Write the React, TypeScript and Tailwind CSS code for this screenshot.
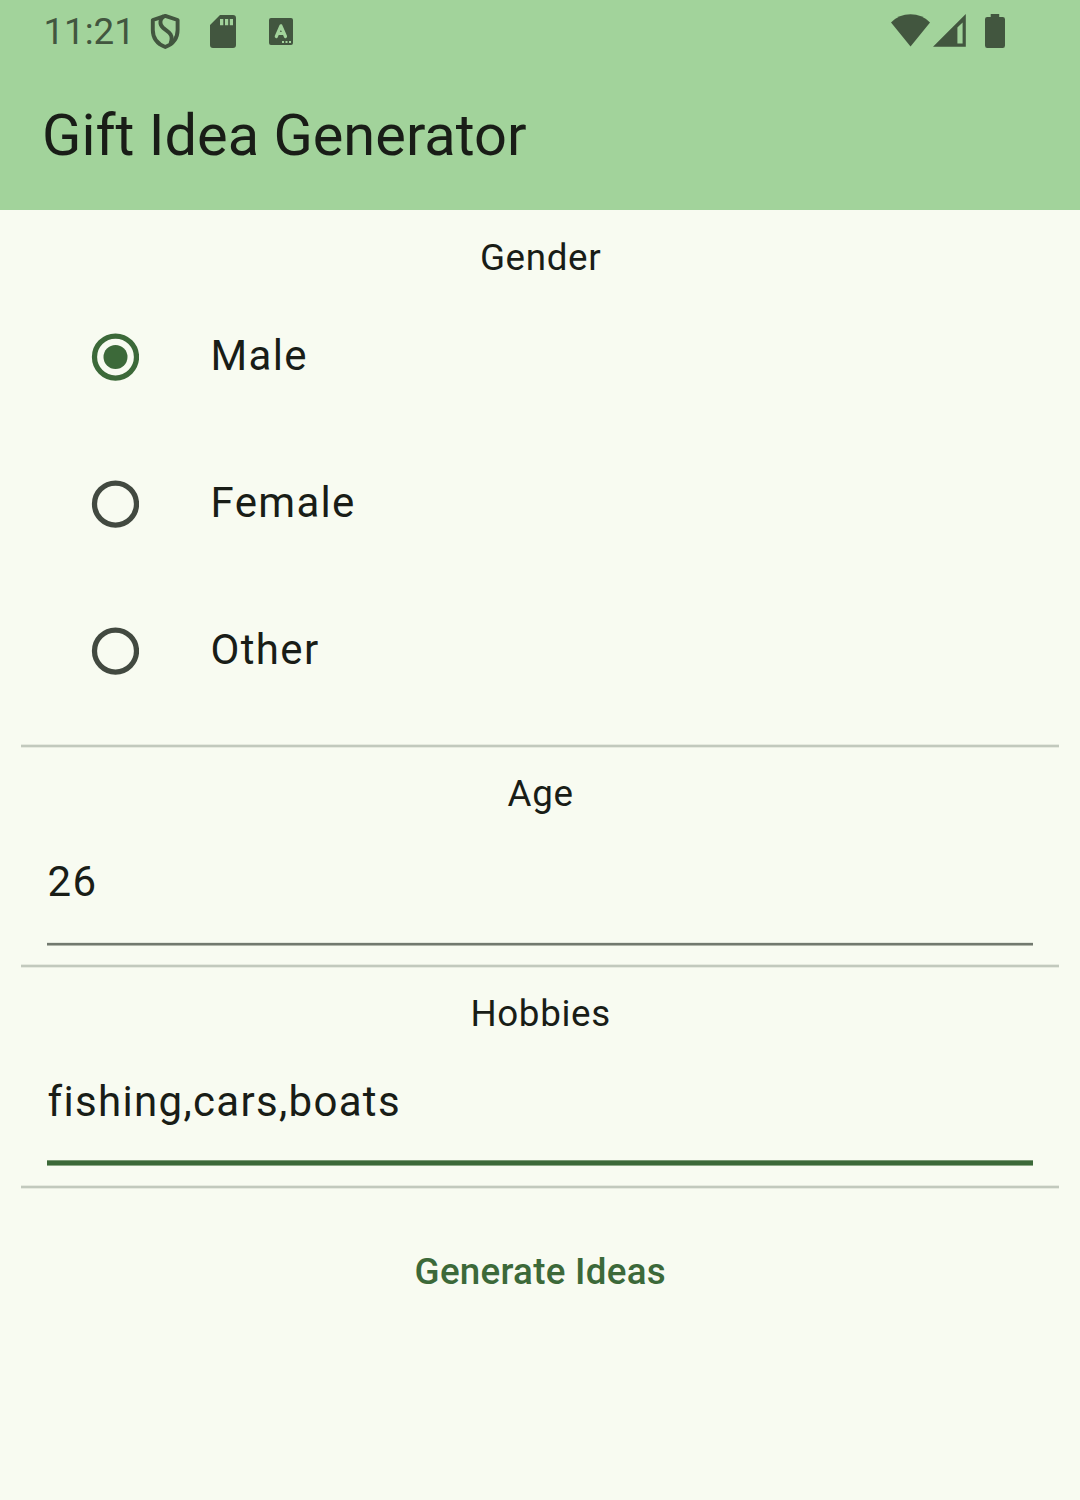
import React, { useState } from "react";

const genders = ["Male", "Female", "Other"];

function StatusBar() {
  return (
    <div className="flex h-[63px] items-center justify-between pl-[43px] pr-[75px] text-[#42563f]">
      <div className="flex items-center">
        <span className="w-[107px] pl-[0.4px] text-[36.75px] leading-[63px]">11:21</span>
        <svg className="h-[37px] w-[30px]" viewBox="0 0 30 37" fill="none" stroke="currentColor" strokeWidth="3.9" strokeLinejoin="round">
          <path d="M15.3 2.9 27.6 7V17C27.6 25.5 23 31 15.3 34 7.5 31 2.8 25.5 2.8 17V7Z" />
          <path d="M14 3C9.5 6.5 9.3 11.5 13 14.8C15.5 17 18.5 18.3 20.5 21.3C22.3 24.3 22 27 20.5 30.5" />
        </svg>
        <svg className="ml-[30px] h-[33px] w-[26px]" viewBox="0 0 26 33" fill="currentColor">
          <path fillRule="evenodd" d="M10 0H23Q26 0 26 3V30Q26 33 23 33H3Q0 33 0 30V10ZM10 4V10.3H13.3V4ZM15 4V10.3H18.2V4ZM19.8 4V10.3H23V4Z" />
        </svg>
        <svg className="ml-[33px] h-[27px] w-[24px]" viewBox="0 0 24 27" fill="currentColor">
          <path fillRule="evenodd" d="M2 0H22Q24 0 24 2V25Q24 27 22 27H2Q0 27 0 25V2Q0 0 2 0ZM13 23V25H15V23ZM16.5 23V25H18.5V23ZM20 23V25H22V23Z" />
          <path d="M7.3 18.5 11.9 7.8 16.5 18.5M9 15.5H15" fill="none" stroke="#a2d39b" strokeWidth="3.2" strokeLinecap="round" strokeLinejoin="round" />
        </svg>
      </div>
      <div className="-mt-[2px] flex items-center">
        <svg className="h-[33px] w-[39px]" viewBox="0 0 39 33" fill="currentColor">
          <path d="M0 8.5Q8 .3 19.5 .3T39 8.5L19.5 32.5Z" />
        </svg>
        <svg className="ml-[3px] h-[33px] w-[33px]" viewBox="0 0 33 33" fill="currentColor">
          <path fillRule="evenodd" d="M32.8 0V32.8H0ZM29.6 8.5 24.4 13.5V29.6H29.6Z" />
        </svg>
        <svg className="ml-[18px] h-[34px] w-[21px]" viewBox="0 0 21 34" fill="currentColor">
          <path d="M6.7 0H15.2V3H18.7Q21 3 21 5.3V31.5Q21 34 18.7 34H3.2Q1 34 1 31.5V5.3Q1 3 3.2 3H6.7Z" />
        </svg>
      </div>
    </div>
  );
}

function Radio({ checked }: { checked: boolean }) {
  return (
    <svg className={checked ? "h-[48px] w-[48px] text-[#3c6939]" : "h-[48px] w-[48px] text-[#424940]"} viewBox="0 0 48 48">
      <circle cx="24.5" cy="24" r="21" fill="none" stroke="currentColor" strokeWidth="5.25" />
      {checked && <circle cx="24.5" cy="24" r="12" fill="currentColor" />}
    </svg>
  );
}

function Divider() {
  return <div className="mx-[21px] h-[4px] border-y border-[#e6eadf] bg-[#c2c9bd]" />;
}

function Label({ children }: { children: React.ReactNode }) {
  return (
    <div className="h-[52px] pl-[1.2px] text-center text-[36.75px] leading-[52px] tracking-[0.656px]">{children}</div>
  );
}

export default function App() {
  const [gender, setGender] = useState("Male");
  const [age, setAge] = useState("26");
  const [hobbies, setHobbies] = useState("fishing,cars,boats");

  return (
    <div className="flex h-[1500px] w-[1080px] flex-col overflow-hidden bg-[#f8fbf1] font-['Roboto',sans-serif] text-[#191d17]">
      <header className="h-[210px] bg-[#a2d39b]">
        <StatusBar />
        <h1 className="pl-[42.1px] text-[57.75px] leading-[145px]">Gift Idea Generator</h1>
      </header>

      <section className="h-[534px] pt-[22px]">
        <Label>Gender</Label>
        <div className="-mt-px">
          {genders.map((g) => (
            <button key={g} onClick={() => setGender(g)} className="flex h-[147px] w-full items-center pl-[91px] text-left">
              <Radio checked={gender === g} />
              <span className="-mt-[2px] ml-[71.6px] text-[42px] leading-[63px] tracking-[1.3125px]">{g}</span>
            </button>
          ))}
        </div>
      </section>
      <Divider />

      <section className="h-[216px] pt-[20px]">
        <Label>Age</Label>
        <div className="mx-[47px]">
          <input
            value={age}
            onChange={(e) => setAge(e.target.value)}
            className="block h-[122px] w-full pl-[0.6px] pt-px text-[42px] tracking-[1.3125px] outline-none"
          />
          <div className="h-[4px] border-y border-t-[#e4e8de] border-b-[#b1b6ab] bg-[#72796f]" />
        </div>
      </section>
      <Divider />

      <section className="h-[217px] pt-[20px]">
        <Label>Hobbies</Label>
        <div className="mx-[47px]">
          <input
            value={hobbies}
            onChange={(e) => setHobbies(e.target.value)}
            className="block h-[120px] w-full pl-[0.6px] pt-[3px] text-[42px] tracking-[1.3125px] outline-none"
          />
          <div className="h-[6px] border-y border-t-[#7a9974] border-b-[#8ca986] bg-[#3c6939]" />
        </div>
      </section>
      <Divider />

      <button className="mx-auto mt-[30px] h-[105px] pl-[0.5px] text-[36.75px] font-medium tracking-[0.2625px] text-[#3c6939]">
        Generate Ideas
      </button>
    </div>
  );
}
